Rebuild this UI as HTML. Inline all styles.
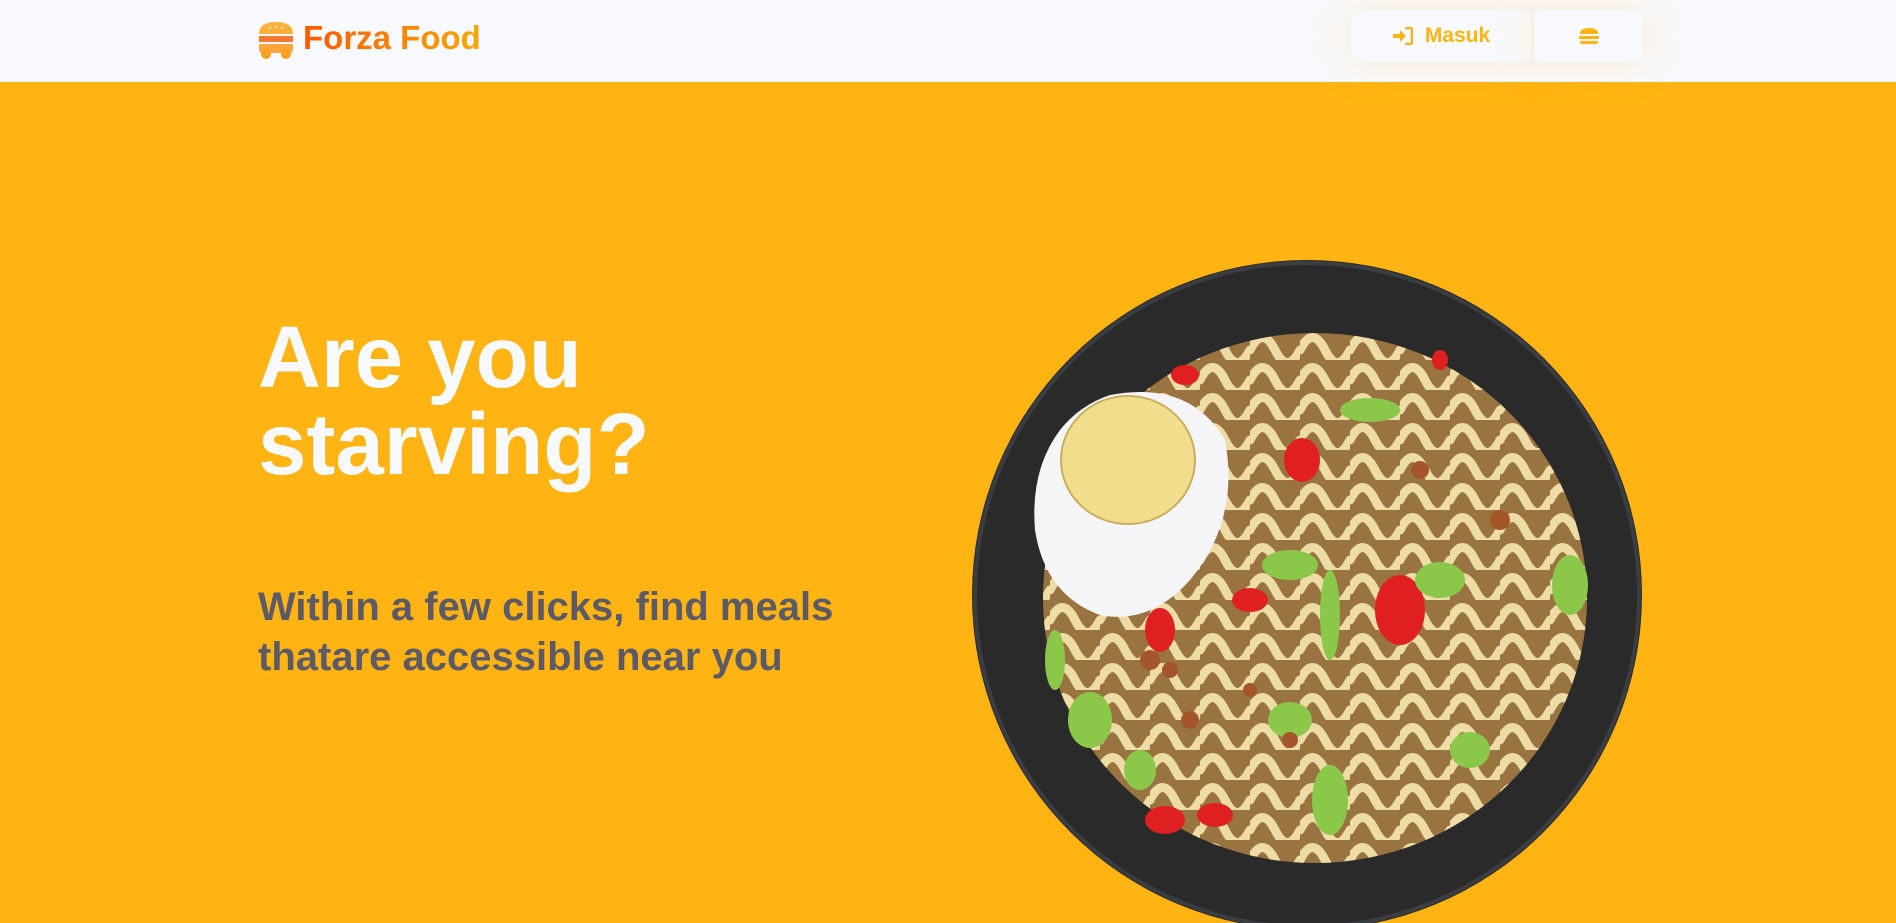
<!DOCTYPE html>
<html><head><meta charset="utf-8"><style>
*{margin:0;padding:0;box-sizing:border-box}
body{width:1896px;height:923px;overflow:hidden;background:#FFB413;font-family:"Liberation Sans",sans-serif;position:relative}
.hdr{position:absolute;left:0;top:0;width:1896px;height:82px;background:#F8F9FC}
.logo{position:absolute;left:257px;top:20px}
.brand{position:absolute;left:303px;top:19px;font-size:33px;font-weight:bold;background:linear-gradient(90deg,#FF5A00,#FFA500);-webkit-background-clip:text;color:transparent}
.btn{position:absolute;top:10px;height:52px;background:#F8F9FC;border-radius:6px;box-shadow:0 0 40px rgba(255,190,80,0.25);color:#FFB413;font-weight:bold;font-size:21px;display:flex;align-items:center;justify-content:center}
h1{position:absolute;left:258px;top:314px;font-size:87px;line-height:87px;color:#F8F9FC;font-weight:900}
.sub{position:absolute;left:258px;top:582px;font-size:40px;line-height:50px;color:#5C5A66;font-weight:bold}
svg.bowl{position:absolute;left:0;top:0}
</style></head><body>
<div class="hdr"></div>
<svg class="logo" width="38" height="40" viewBox="0 0 38 40">
<path d="M2 14 Q2 2 19 2 Q36 2 36 14 Z" fill="#FFB03A"/>
<circle cx="13" cy="8" r="1" fill="#fff"/><circle cx="19" cy="7" r="1" fill="#fff"/><circle cx="25" cy="8" r="1" fill="#fff"/>
<rect x="2" y="16" width="34" height="6" fill="#F47A30"/>
<path d="M2 24 H36 V29 Q36 33 32 33 H6 Q2 33 2 29Z" fill="#FFA53A"/>
<circle cx="9" cy="34" r="5" fill="#FFA020"/><circle cx="29" cy="34" r="5" fill="#FFA020"/>
</svg>
<div class="brand">Forza Food</div>
<div class="btn" style="left:1351px;width:181px"><svg width="20" height="18" viewBox="0 0 20 18" style="margin-right:12px"><path d="M0 7h7V3l6 6-6 6v-4H0z" fill="#FFB413"/><path d="M12 1h5q2 0 2 2v12q0 2-2 2h-5" stroke="#FFB413" stroke-width="2.5" fill="none"/></svg>Masuk</div>
<div class="btn" style="left:1534px;width:109px"><svg width="20" height="18" viewBox="0 0 20 18"><path d="M1 7Q1 1 10 1Q19 1 19 7Z" fill="#FFB413"/><rect x="0" y="9" width="20" height="3" rx="1" fill="#FFB413"/><path d="M1 14H19V15Q19 17 17 17H3Q1 17 1 15Z" fill="#FFB413"/></svg></div>
<h1>Are you<br>starving?</h1>
<div class="sub">Within a few clicks, find meals<br>thatare accessible near you</div>
<svg class="bowl" width="1896" height="923">
<defs><clipPath id="c"><ellipse cx="1315" cy="598" rx="272" ry="265"/></clipPath>
<pattern id="n" width="50" height="30" patternUnits="userSpaceOnUse"><path d="M0 20q12.5-25 25 0t25 0" fill="none" stroke="#EEDCA6" stroke-width="9" stroke-linecap="round"/></pattern></defs>
<circle cx="1307" cy="595" r="335" fill="#2a2a2a"/>
<circle cx="1307" cy="595" r="332" fill="none" stroke="#3a3d42" stroke-width="4"/>
<g clip-path="url(#c)">
<rect x="1030" y="320" width="580" height="560" fill="#9a7440"/>
<rect x="1030" y="320" width="580" height="560" fill="url(#n)"/>
</g>
<g fill="#E02020"><ellipse cx="1180" cy="430" rx="14" ry="18"/><ellipse cx="1400" cy="610" rx="25" ry="35"/><ellipse cx="1160" cy="630" rx="15" ry="22"/><ellipse cx="1165" cy="820" rx="20" ry="14"/><ellipse cx="1250" cy="600" rx="18" ry="12"/><ellipse cx="1440" cy="360" rx="8" ry="10"/><ellipse cx="1302" cy="460" rx="18" ry="22"/><ellipse cx="1185" cy="375" rx="14" ry="10"/><ellipse cx="1215" cy="815" rx="18" ry="12"/></g>
<g fill="#8BC84A"><ellipse cx="1290" cy="565" rx="28" ry="15"/><ellipse cx="1330" cy="615" rx="10" ry="45"/><ellipse cx="1440" cy="580" rx="25" ry="18"/><ellipse cx="1570" cy="585" rx="18" ry="30"/><ellipse cx="1090" cy="720" rx="22" ry="28"/><ellipse cx="1330" cy="800" rx="18" ry="35"/><ellipse cx="1290" cy="720" rx="22" ry="18"/><ellipse cx="1370" cy="410" rx="30" ry="12"/><ellipse cx="1055" cy="660" rx="10" ry="30"/><ellipse cx="1140" cy="770" rx="16" ry="20"/><ellipse cx="1470" cy="750" rx="20" ry="18"/></g>
<g fill="#A4562A"><circle cx="1150" cy="660" r="10"/><circle cx="1170" cy="670" r="8"/><circle cx="1190" cy="720" r="9"/><circle cx="1250" cy="690" r="7"/><circle cx="1290" cy="740" r="8"/><circle cx="1420" cy="470" r="9"/><circle cx="1500" cy="520" r="10"/></g>
<path d="M1110 395Q1190 380 1225 440Q1240 520 1190 580Q1150 625 1100 615Q1045 595 1035 530Q1030 470 1060 430Q1080 405 1110 395Z" fill="#F5F5F7"/>
<ellipse cx="1128" cy="460" rx="67" ry="64" fill="#F1DE8C" stroke="#C9B060" stroke-width="2"/>
</svg>
</body></html>
